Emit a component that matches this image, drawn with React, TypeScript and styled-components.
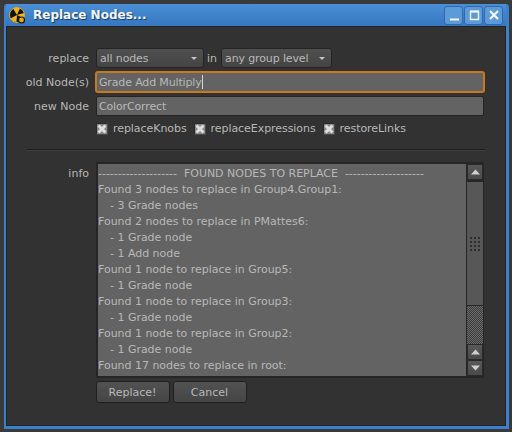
import styled, { createGlobalStyle } from 'styled-components'

const Global = createGlobalStyle`
  html, body { margin: 0; padding: 0; background: #3a3a3a; }
  body { font-family: "DejaVu Sans", sans-serif; font-size: 11px; }
`

const infoLines = [
  { text: '--------------------  FOUND NODES TO REPLACE  --------------------', sub: false },
  { text: 'Found 3 nodes to replace in Group4.Group1:', sub: false },
  { text: '- 3 Grade nodes', sub: true },
  { text: 'Found 2 nodes to replace in PMattes6:', sub: false },
  { text: '- 1 Grade node', sub: true },
  { text: '- 1 Add node', sub: true },
  { text: 'Found 1 node to replace in Group5:', sub: false },
  { text: '- 1 Grade node', sub: true },
  { text: 'Found 1 node to replace in Group3:', sub: false },
  { text: '- 1 Grade node', sub: true },
  { text: 'Found 1 node to replace in Group2:', sub: false },
  { text: '- 1 Grade node', sub: true },
  { text: 'Found 17 nodes to replace in root:', sub: false },
]

const Screen = styled.div`
  width: 512px;
  height: 432px;
  box-sizing: border-box;
  padding: 4px 3px 3px 4px;
  background: #3a3a3a;
  overflow: hidden;
`

const Frame = styled.div`
  height: 100%;
  box-sizing: border-box;
  display: flex;
  flex-direction: column;
  padding: 0 3px 3px 2px;
  background: #3a80cc;
  border-radius: 3px 3px 0 0;
`

const TitleBar = styled.div`
  height: 22px;
  flex-shrink: 0;
  display: flex;
  align-items: center;
  padding: 0 3px 0 3px;
  background: linear-gradient(#4a8fd6, #3577c0);
`

const Title = styled.span`
  margin-left: 7px;
  font-weight: bold;
  font-size: 12px;
  color: #f4f6f8;
  text-shadow: 1px 1px 1px #123a68;
`

const WinButtons = styled.div`
  margin-left: auto;
  display: flex;
  gap: 1px;
`

const WinButton = styled.div`
  width: 19px;
  height: 19px;
  box-sizing: border-box;
  border-radius: 3px;
  background: #5d9ad9;
  border: 1px solid #3069ab;
  display: flex;
  align-items: center;
  justify-content: center;
`

const Body = styled.div`
  flex: 1;
  min-height: 0;
  display: flex;
  flex-direction: column;
  padding: 21px 21px 0 15px;
  background: #323232;
  border: 1px solid #222;
`

const Row = styled.div<{ $mt?: number }>`
  display: grid;
  grid-template-columns: 67px 1fr;
  column-gap: 7px;
  align-items: center;
  margin-top: ${(p) => p.$mt ?? 0}px;
`

const Label = styled.label`
  text-align: right;
  white-space: nowrap;
  color: #b8b8b8;
`

const Controls = styled.div`
  display: flex;
  align-items: center;
`

const Combo = styled.div<{ $w: number }>`
  width: ${(p) => p.$w}px;
  height: 20px;
  box-sizing: border-box;
  padding: 0 3px;
  display: flex;
  align-items: center;
  justify-content: space-between;
  letter-spacing: -0.13px;
  color: #b8b8b8;
  background: linear-gradient(#505050, #444);
  border: 1px solid #242424;
  border-radius: 3px;
`

const Caret = styled.span`
  width: 0;
  height: 0;
  margin-right: 3px;
  border-left: 3px solid transparent;
  border-right: 3px solid transparent;
  border-top: 3px solid #c4c4c4;
`

const InWord = styled.span`
  margin: 0 4px 0 3px;
  color: #b8b8b8;
`

const TextField = styled.div<{ $focus?: boolean }>`
  height: 20px;
  box-sizing: border-box;
  padding: 0 2px;
  display: flex;
  align-items: center;
  letter-spacing: -0.15px;
  color: #b8b8b8;
  background: #636363;
  border: 1px solid ${(p) => (p.$focus ? '#c8791f' : '#242424')};
  box-shadow: ${(p) => (p.$focus ? '0 0 0 1px #c8791f' : 'none')};
  border-radius: 2px;
`

const Cursor = styled.span`
  width: 1px;
  height: 14px;
  background: #d6d6d6;
`

const Checks = styled.div`
  margin: 6px 0 0 74px;
  display: flex;
  align-items: center;
  height: 13px;
`

const CheckBox = styled.span`
  width: 12px;
  height: 12px;
  box-sizing: border-box;
  background: #858585;
  border: 1px solid #2a2a2a;
  border-right-color: #4a4a4a;
  border-bottom-color: #4a4a4a;
  display: flex;
  align-items: center;
  justify-content: center;
`

const CheckLabel = styled.span`
  margin: 0 7px 0 5px;
  letter-spacing: -0.06px;
  color: #b8b8b8;
`

const Separator = styled.hr`
  width: 458px;
  height: 0;
  margin: 14px 0 11px 5px;
  border: 0;
  border-top: 1px solid #1e1e1e;
  border-bottom: 1px solid #3e3e3e;
`

const InfoRow = styled.div`
  display: grid;
  grid-template-columns: 67px 1fr;
  column-gap: 7px;
`

const InfoLabel = styled(Label)`
  margin-top: 5px;
`

const InfoBox = styled.div`
  height: 216px;
  box-sizing: border-box;
  display: flex;
  background: #636363;
  border: 2px solid #262626;
  border-width: 2px 1px 2px 2px;
`

const InfoText = styled.div`
  flex: 1;
  min-width: 0;
  overflow: hidden;
  padding-top: 2px;
  line-height: 16px;
  letter-spacing: -0.02px;
  color: #b8b8b8;
  white-space: pre;
`

const InfoLine = styled.div<{ $sub: boolean }>`
  padding-left: ${(p) => (p.$sub ? 12 : 0)}px;
`

const ScrollBar = styled.div`
  width: 16px;
  flex-shrink: 0;
  display: flex;
  flex-direction: column;
  background: #5a5a5a;
  border-left: 1px solid #262626;
`

const ScrollBtn = styled.div`
  height: 16px;
  flex-shrink: 0;
  box-sizing: border-box;
  display: flex;
  align-items: center;
  justify-content: center;
  background: linear-gradient(#585858, #4a4a4a);
  border: 1px solid #2a2a2a;
`

const ScrollThumb = styled.div`
  height: 126px;
  flex-shrink: 0;
  box-sizing: border-box;
  display: flex;
  align-items: flex-end;
  justify-content: center;
  background: #575757;
  border-top: 2px solid #262626;
  border-bottom: 1px solid #262626;
`

const Grip = styled.div`
  width: 12px;
  height: 16px;
  margin-bottom: 53px;
  background-image: radial-gradient(#2e2e2e 1px, transparent 1px);
  background-size: 4px 4px;
`

const ScrollTrack = styled.div`
  flex: 1;
  background-color: #4a4a4a;
  background-image: repeating-conic-gradient(#6a6a6a 0 25%, #3c3c3c 0 50%);
  background-size: 2px 2px;
`

const Buttons = styled.div`
  margin: 3px 0 0 74px;
  display: flex;
  gap: 3px;
`

const PushButton = styled.div<{ $w: number }>`
  width: ${(p) => p.$w}px;
  height: 22px;
  box-sizing: border-box;
  padding-right: 1px;
  display: flex;
  align-items: center;
  justify-content: center;
  color: #b8b8b8;
  background: linear-gradient(#525252, #454545);
  border: 1px solid #1f1f1f;
  border-radius: 3px;
`

const Arrow = ({ down }: { down?: boolean }) => (
  <svg width="9" height="6" viewBox="0 0 9 6">
    <path d={down ? 'M0 0.5H9L4.5 5.5Z' : 'M0 5.5H9L4.5 0.5Z'} fill="#d0d0d0" />
  </svg>
)

const Cross = () => (
  <svg width="10" height="10" viewBox="0 0 10 10">
    <path d="M1.5 1.5L8.5 8.5M8.5 1.5L1.5 8.5" stroke="#dedede" strokeWidth="3" />
  </svg>
)

const NukeLogo = () => (
  <svg width="17" height="17" viewBox="0 0 17 17">
    <circle cx="8" cy="8" r="7.5" fill="#15120a" stroke="#e8a818" strokeWidth="1" />
    <path d="M8 8L4 1.5A7.5 7.5 0 0 1 11 1.2Z" fill="#f0b41c" />
    <path d="M8 8L15 6A7.5 7.5 0 0 1 14.5 11.5Z" fill="#f0b41c" />
    <path d="M8 8L7.5 15A7.5 7.5 0 0 1 1.5 11.5Z" fill="#f0b41c" />
    <circle cx="12.5" cy="13" r="3" fill="#e8a818" stroke="#15120a" strokeWidth="1.2" />
  </svg>
)

export default function App() {
  return (
    <Screen>
      <Global />
      <Frame>
        <TitleBar>
          <NukeLogo />
          <Title>Replace Nodes...</Title>
          <WinButtons>
            <WinButton>
              <svg width="12" height="12" viewBox="0 0 12 12"><path d="M2 10.5H11" stroke="#f4f6f8" strokeWidth="2" /></svg>
            </WinButton>
            <WinButton>
              <svg width="12" height="12" viewBox="0 0 12 12"><path d="M2.5 2.5H10.5V10.5H2.5Z" fill="none" stroke="#f4f6f8" strokeWidth="1.4" /><path d="M2 2.5H11" stroke="#f4f6f8" strokeWidth="2" /></svg>
            </WinButton>
            <WinButton>
              <svg width="12" height="12" viewBox="0 0 12 12"><path d="M2 2L10 10M10 2L2 10" stroke="#f4f6f8" strokeWidth="2.2" /></svg>
            </WinButton>
          </WinButtons>
        </TitleBar>
        <Body>
          <Row>
            <Label>replace</Label>
            <Controls>
              <Combo $w={108}>all nodes<Caret /></Combo>
              <InWord>in</InWord>
              <Combo $w={111}>any group level<Caret /></Combo>
            </Controls>
          </Row>
          <Row $mt={4}>
            <Label>old Node(s)</Label>
            <TextField $focus>Grade Add Multiply<Cursor /></TextField>
          </Row>
          <Row $mt={4}>
            <Label>new Node</Label>
            <TextField>ColorCorrect</TextField>
          </Row>
          <Checks>
            <CheckBox><Cross /></CheckBox>
            <CheckLabel>replaceKnobs</CheckLabel>
            <CheckBox><Cross /></CheckBox>
            <CheckLabel>replaceExpressions</CheckLabel>
            <CheckBox><Cross /></CheckBox>
            <CheckLabel>restoreLinks</CheckLabel>
          </Checks>
          <Separator />
          <InfoRow>
            <InfoLabel>info</InfoLabel>
            <InfoBox>
              <InfoText>
                {infoLines.map((l, i) => (
                  <InfoLine key={i} $sub={l.sub}>{l.text}</InfoLine>
                ))}
              </InfoText>
              <ScrollBar>
                <ScrollBtn><Arrow /></ScrollBtn>
                <ScrollThumb><Grip /></ScrollThumb>
                <ScrollTrack />
                <ScrollBtn><Arrow /></ScrollBtn>
                <ScrollBtn><Arrow down /></ScrollBtn>
              </ScrollBar>
            </InfoBox>
          </InfoRow>
          <Buttons>
            <PushButton $w={74}>Replace!</PushButton>
            <PushButton $w={74}>Cancel</PushButton>
          </Buttons>
        </Body>
      </Frame>
    </Screen>
  )
}
